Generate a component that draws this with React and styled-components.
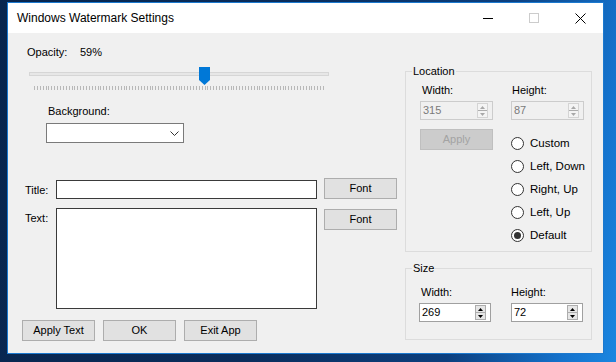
import React from 'react';
import styled, { createGlobalStyle } from 'styled-components';

const GlobalStyle = createGlobalStyle`
  html, body {
    margin: 0;
    padding: 0;
  }
  body {
    width: 616px;
    height: 362px;
    overflow: hidden;
    font-family: "Liberation Sans", Arial, sans-serif;
  }
`;

const Desktop = styled.div`
  width: 616px;
  height: 362px;
  box-sizing: border-box;
  padding: 2px 0 0 7px;
  background: linear-gradient(100deg, #08254d 0%, #0a2d5c 45%, #0c3f7e 75%, #1472cc 92%, #1b86e0 100%);
`;

const Window = styled.div`
  width: 597px;
  height: 352px;
  box-sizing: border-box;
  border: 1px solid #1b79cf;
  display: flex;
  flex-direction: column;
  background: #f0f0f0;
`;

const TitleBar = styled.div`
  height: 30px;
  flex-shrink: 0;
  background: #fff;
  display: flex;
  align-items: center;
`;

const Caption = styled.div`
  flex: 1;
  padding-left: 9px;
  font-size: 12px;
  color: #000;
`;

const CaptionButton = styled.div`
  width: 46px;
  height: 30px;
  display: flex;
  align-items: center;
  justify-content: center;
`;

const Client = styled.div`
  flex: 1;
  display: flex;
  font-size: 11px;
  line-height: 13px;
  color: #000;
`;

const LeftPane = styled.div`
  flex: 1;
  display: flex;
  flex-direction: column;
  align-items: flex-start;
`;

const RightPane = styled.div`
  width: 187px;
  margin: 32px 11px 0 0;
  display: flex;
  flex-direction: column;
  gap: 10px;
`;

const OpacityRow = styled.div`
  display: flex;
  margin: 13px 0 0 19px;
`;

const Label = styled.span`
  display: block;
  width: ${(p) => (p.$w ? `${p.$w}px` : 'auto')};
  margin-top: ${(p) => p.$top || 0}px;
  margin-left: ${(p) => p.$left || 0}px;
  white-space: nowrap;
`;

const Slider = styled.div`
  position: relative;
  width: 300px;
  margin: 8px 0 0 21px;
`;

const Track = styled.div`
  margin-top: 5px;
  height: 4px;
  box-sizing: border-box;
  border: 1px solid #d6d6d6;
  background: #e7e7e7;
`;

const Ticks = styled.svg`
  display: block;
  margin-top: 10px;
`;

const Thumb = styled.svg`
  position: absolute;
  top: 0;
  left: ${(p) => p.$x}px;
`;

const Combo = styled.div`
  width: 138px;
  height: 20px;
  box-sizing: border-box;
  margin: 5px 0 0 38px;
  border: 1px solid #7a7a7a;
  background: #fff;
  display: flex;
  align-items: center;
  justify-content: flex-end;
  padding-right: 4px;
`;

const FieldRow = styled.div`
  display: flex;
  align-items: flex-start;
  margin: ${(p) => p.$top}px 0 0 17px;
`;

const TextBox = styled.div`
  width: 261px;
  height: ${(p) => p.$h}px;
  margin-top: ${(p) => p.$top || 0}px;
  box-sizing: border-box;
  border: 1px solid #3a3a3a;
  background: #fff;
`;

const Button = styled.div`
  width: 73px;
  height: 21px;
  box-sizing: border-box;
  margin-top: ${(p) => p.$top || 0}px;
  margin-left: ${(p) => p.$left || 0}px;
  border: 1px solid ${(p) => (p.$disabled ? '#bfbfbf' : '#adadad')};
  background: ${(p) => (p.$disabled ? '#cccccc' : '#e1e1e1')};
  color: ${(p) => (p.$disabled ? '#a3a3a3' : '#000')};
  display: flex;
  align-items: center;
  justify-content: center;
`;

const ButtonRow = styled.div`
  display: flex;
  gap: 8px;
  margin: 11px 0 0 14px;
`;

const Group = styled.fieldset`
  margin: 0;
  padding: 0;
  height: ${(p) => p.$h}px;
  box-sizing: border-box;
  border: 1px solid #dcdcdc;
  min-width: 0;
`;

const Legend = styled.legend`
  margin-left: 6px;
  padding: 0 1px;
  font-size: 11px;
  line-height: 13px;
`;

const GroupGrid = styled.div`
  display: grid;
  grid-template-columns: ${(p) => p.$col}px ${(p) => p.$col}px;
  column-gap: ${(p) => p.$gap}px;
  align-items: start;
  padding: ${(p) => p.$top}px 0 0 ${(p) => p.$pad}px;
`;

const Spin = styled.div`
  margin-top: 4px;
  width: ${(p) => p.$w}px;
  height: 19px;
  box-sizing: border-box;
  border: 1px solid ${(p) => (p.$disabled ? '#cccccc' : '#a0a0a0')};
  background: ${(p) => (p.$disabled ? '#f0f0f0' : '#fff')};
  color: ${(p) => (p.$disabled ? '#7a7a7a' : '#000')};
  display: flex;
  align-items: center;
  padding: 0 4px 0 2px;
`;

const SpinValue = styled.span`
  flex: 1;
`;

const SpinButtons = styled.div`
  width: 11px;
  height: 15px;
  display: flex;
  flex-direction: column;
  border: 1px solid ${(p) => (p.$disabled ? '#d4d4d4' : '#adadad')};
  box-sizing: border-box;
`;

const SpinHalf = styled.div`
  flex: 1;
  background: ${(p) => (p.$disabled ? '#f4f4f4' : '#e6e6e6')};
  display: flex;
  align-items: center;
  justify-content: center;
  & + & {
    border-top: 1px solid ${(p) => (p.$disabled ? '#d4d4d4' : '#adadad')};
  }
`;

const RadioList = styled.div`
  margin-top: 12px;
  display: flex;
  flex-direction: column;
`;

const RadioRow = styled.div`
  height: 23px;
  display: flex;
  align-items: center;
  gap: 6px;
  font-size: 11.5px;
  white-space: nowrap;
`;

const RadioRing = styled.span`
  flex-shrink: 0;
  width: 13px;
  height: 13px;
  box-sizing: border-box;
  border-radius: 50%;
  border: 1px solid #333;
  background: #fff;
  display: flex;
  align-items: center;
  justify-content: center;
  &::after {
    content: '';
    width: 7px;
    height: 7px;
    border-radius: 50%;
    background: ${(p) => (p.$checked ? '#333' : 'transparent')};
  }
`;

const SpinBox = ({ value, width = 73, disabled }) => {
  const arrow = disabled ? '#a8a8a8' : '#000';
  return (
    <Spin $w={width} $disabled={disabled}>
      <SpinValue>{value}</SpinValue>
      <SpinButtons $disabled={disabled}>
        <SpinHalf $disabled={disabled}>
          <svg width="5" height="3"><path d="M0 3 L2.5 0 L5 3 Z" fill={arrow} /></svg>
        </SpinHalf>
        <SpinHalf $disabled={disabled}>
          <svg width="5" height="3"><path d="M0 0 L5 0 L2.5 3 Z" fill={arrow} /></svg>
        </SpinHalf>
      </SpinButtons>
    </Spin>
  );
};

const tickXs = Array.from({ length: 101 }, (_, i) => Math.round(5 + i * 2.89) + 0.5);

const radios = ['Custom', 'Left, Down', 'Right, Up', 'Left, Up', 'Default'];

export default function App() {
  return (
    <>
      <GlobalStyle />
      <Desktop>
        <Window>
          <TitleBar>
            <Caption>Windows Watermark Settings</Caption>
            <CaptionButton>
              <svg width="10" height="10"><path d="M0 5.5 H10" stroke="#000" strokeWidth="1" /></svg>
            </CaptionButton>
            <CaptionButton>
              <svg width="10" height="10"><rect x="0.5" y="0.5" width="9" height="9" fill="none" stroke="#cccccc" /></svg>
            </CaptionButton>
            <CaptionButton>
              <svg width="11" height="11"><path d="M0.5 0.5 L10.5 10.5 M10.5 0.5 L0.5 10.5" stroke="#000" strokeWidth="1" /></svg>
            </CaptionButton>
          </TitleBar>
          <Client>
            <LeftPane>
              <OpacityRow>
                <Label $w={53}>Opacity:</Label>
                <Label>59%</Label>
              </OpacityRow>
              <Slider>
                <Track />
                <Ticks width="300" height="4">
                  {tickXs.map((x) => (
                    <line key={x} x1={x} x2={x} y1="0" y2="4" stroke="#b8b8b8" />
                  ))}
                </Ticks>
                <Thumb $x={170} width="11" height="18">
                  <path d="M0 0 H11 V13 L5.5 18 L0 13 Z" fill="#0078d7" />
                </Thumb>
              </Slider>
              <Label $top={15} $left={40}>Background:</Label>
              <Combo>
                <svg width="9" height="5"><path d="M0.5 0.5 L4.5 4.5 L8.5 0.5" fill="none" stroke="#333" /></svg>
              </Combo>
              <FieldRow $top={35}>
                <Label $w={31} $top={6}>Title:</Label>
                <TextBox $h={19} $top={2} />
                <Button $left={7}>Font</Button>
              </FieldRow>
              <FieldRow $top={9}>
                <Label $w={31} $top={4}>Text:</Label>
                <TextBox $h={101} />
                <Button $left={7} $top={1}>Font</Button>
              </FieldRow>
              <ButtonRow>
                <Button>Apply Text</Button>
                <Button>OK</Button>
                <Button>Exit App</Button>
              </ButtonRow>
            </LeftPane>
            <RightPane>
              <Group $h={187}>
                <Legend>Location</Legend>
                <GroupGrid $col={73} $gap={18} $top={6} $pad={14}>
                  <Label $left={2}>Width:</Label>
                  <Label $left={1}>Height:</Label>
                  <SpinBox value="315" disabled />
                  <SpinBox value="87" disabled />
                  <Button $disabled $top={9}>Apply</Button>
                  <RadioList>
                    {radios.map((r) => (
                      <RadioRow key={r}>
                        <RadioRing $checked={r === 'Default'} />
                        {r}
                      </RadioRow>
                    ))}
                  </RadioList>
                </GroupGrid>
              </Group>
              <Group $h={78}>
                <Legend>Size</Legend>
                <GroupGrid $col={72} $gap={20} $top={11} $pad={13}>
                  <Label $left={2}>Width:</Label>
                  <Label>Height:</Label>
                  <SpinBox value="269" width={72} />
                  <SpinBox value="72" width={72} />
                </GroupGrid>
              </Group>
            </RightPane>
          </Client>
        </Window>
      </Desktop>
    </>
  );
}
